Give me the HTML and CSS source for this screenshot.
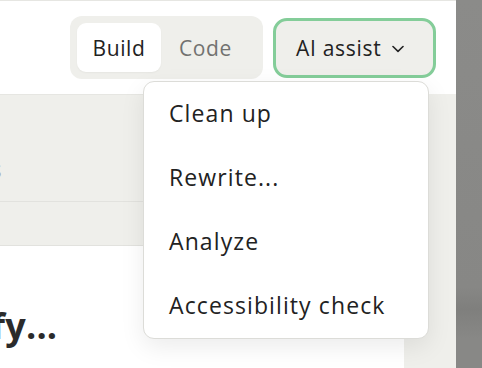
FILE: index.html
```html
<!DOCTYPE html>
<html lang="en">
<head>
    <meta charset="UTF-8">
    <meta name="viewport" content="width=device-width, initial-scale=1.0">
    <title>Editor</title>
    <link rel="stylesheet" href="styles.css">
</head>
<body>

<div class="app">
    <div class="main">
        <header class="topbar">
            <div class="actions">
                <div class="mode-toggle">
                    <button class="mode active">Build</button>
                    <button class="mode code">Code</button>
                </div>
                <div class="assist">
                    <button class="assist-btn">
                        AI assist
                        <svg class="chevron" width="12" height="8" viewBox="0 0 12 8"><path d="M1 1.5 L6 6.3 L11 1.5" fill="none" stroke="#222" stroke-width="1.6" stroke-linecap="round" stroke-linejoin="round"/></svg>
                    </button>
                    <ul class="menu">
                        <li>Clean up</li>
                        <li>Rewrite...</li>
                        <li>Analyze</li>
                        <li>Accessibility check</li>
                    </ul>
                </div>
            </div>
        </header>

        <div class="workspace">
            <div class="canvas">
                <div class="band">
                    <div class="band-row tabs"><span class="tab-label">Components</span></div>
                    <div class="band-row"></div>
                </div>
                <div class="content">
                    <h2 class="title">Simplify...</h2>
                </div>
            </div>
            <aside class="side"></aside>
        </div>
    </div>
    <div class="scrim"></div>
</div>

</body>
</html>
```

FILE: styles.css
```css
body {
    margin: 0;
    font-family: 'Open Sans', sans-serif;
    color: #222;
    background: #fff;
}
.app {
    display: flex;
    height: 368px;
    overflow: hidden;
}
.main {
    width: 456px;
    display: flex;
    flex-direction: column;
    border-top: 1px solid #e6e6e2;
}
.scrim {
    flex: 1;
    background: linear-gradient(to bottom, #8b8b89 0%, #878785 78%, #7f7f7d 84%, #888886 92%);
}
.topbar {
    height: 93px;
    display: flex;
    justify-content: flex-end;
    align-items: flex-start;
    padding-right: 20px;
}
.actions {
    display: flex;
    align-items: center;
    gap: 10px;
    margin-top: 15px;
}
.mode-toggle {
    display: flex;
    background: #efefeb;
    padding: 7px;
    border-radius: 12px;
}
.mode {
    font-family: inherit;
    font-size: 21px;
    font-weight: 500;
    letter-spacing: 0.6px;
    border: none;
    background: none;
    width: 84px;
    height: 49px;
    padding: 0;
    border-radius: 9px;
    color: #727270;
}
.mode.code {
    width: 95px;
    padding-right: 6px;
}
.mode.active {
    background: #fff;
    color: #222;
    box-shadow: 0 1px 2px rgba(0, 0, 0, 0.04);
}
.assist {
    position: relative;
}
.assist-btn {
    font-family: inherit;
    font-size: 21px;
    font-weight: 500;
    letter-spacing: 0.7px;
    color: #222;
    width: 163px;
    height: 60px;
    padding: 0 0 0 20px;
    display: flex;
    align-items: center;
    gap: 11px;
    background: #efefeb;
    border: 3px solid #84cd99;
    border-radius: 14px;
}
.chevron {
    margin-top: 3px;
}
.menu {
    position: absolute;
    top: 63px;
    right: 7px;
    width: 284px;
    margin: 0;
    padding: 0;
    list-style: none;
    background: #fff;
    border: 1px solid #dcdcd8;
    border-radius: 11px;
    box-shadow: 0 8px 24px rgba(0, 0, 0, 0.08);
    z-index: 2;
}
.menu li {
    height: 64px;
    line-height: 62px;
    padding-left: 25px;
    font-size: 23px;
    letter-spacing: 1.1px;
    color: #222;
}
.workspace {
    flex: 1;
    display: flex;
}
.canvas {
    width: 404px;
    display: flex;
    flex-direction: column;
}
.band {
    background: #efefeb;
    border-top: 1px solid #e6e6e2;
    border-bottom: 1px solid #e2e2de;
}
.band-row {
    height: 43px;
}
.band-row.tabs {
    height: 107px;
    border-bottom: 1px solid #e2e2de;
    display: flex;
    align-items: center;
    padding-top: 40px;
    box-sizing: border-box;
}
.tab-label {
    font-size: 24px;
    color: #a8a8a5;
    margin-left: -142px;
}
.content {
    flex: 1;
    background: #fff;
}
.title {
    margin: 55px 0 0 -121px;
    font-size: 36px;
    font-weight: 700;
    letter-spacing: 0.2px;
    color: #2b2b2b;
}
.side {
    flex: 1;
    background: #efefeb;
}
```
